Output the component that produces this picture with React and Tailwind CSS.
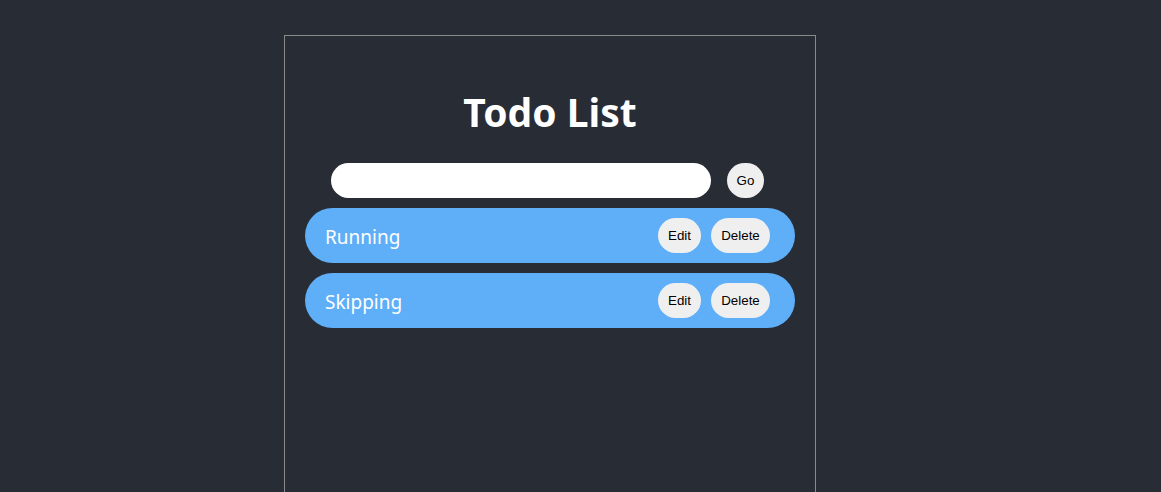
export default function App() {
  const items = ["Running", "Skipping"];
  return (
    <div className="min-h-[492px] w-full bg-[#282c34] overflow-hidden">
      <div className="ml-[284px] pt-[35px]">
        <div className="w-[532px] h-[470px] border border-[#8a8a8a] border-b-0 px-[20px] pt-[52px]">
          <h1
            className="text-center text-white font-bold text-[39px] leading-[48px] m-0"
            style={{ fontFamily: '"Noto Sans", "Open Sans", sans-serif' }}
          >
            Todo List
          </h1>
          <div className="mt-[27px] flex items-center pl-[26px] gap-[16px]">
            <input className="w-[380px] h-[35px] rounded-full bg-white border-0 outline-none px-4" />
            <button
              className="w-[37px] h-[35px] rounded-full bg-[#efefef] text-black text-[13.33px]"
              style={{ fontFamily: '"Liberation Sans", Arial, sans-serif' }}
            >
              Go
            </button>
          </div>
          <div className="mt-[10px] flex flex-col gap-[10px]">
            {items.map((t) => (
              <div
                key={t}
                className="h-[55px] rounded-full bg-[#5eaef8] flex items-center pl-[20px] pr-[25px]"
              >
                <span
                  className="text-white text-[19px] flex-1 pt-[3px]"
                  style={{ fontFamily: '"Noto Sans", "Open Sans", sans-serif' }}
                >
                  {t}
                </span>
                <div
                  className="flex gap-[10px]"
                  style={{ fontFamily: '"Liberation Sans", Arial, sans-serif' }}
                >
                  <button className="w-[43px] h-[35px] rounded-full bg-[#efefef] text-black text-[13.33px]">
                    Edit
                  </button>
                  <button className="w-[59px] h-[35px] rounded-full bg-[#efefef] text-black text-[13.33px]">
                    Delete
                  </button>
                </div>
              </div>
            ))}
          </div>
        </div>
      </div>
    </div>
  );
}
